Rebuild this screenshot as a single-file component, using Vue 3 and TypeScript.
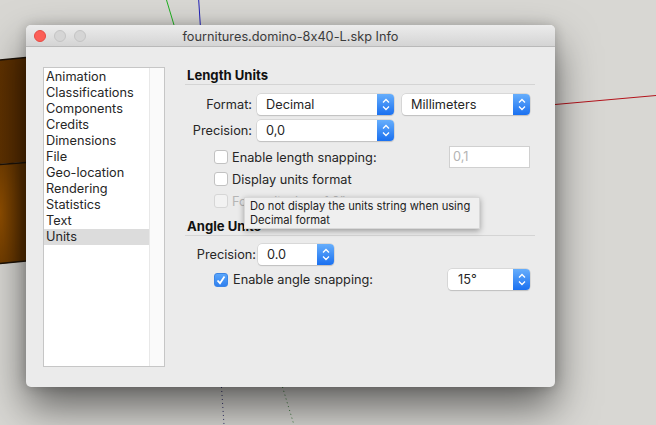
<script setup lang="ts">
const items: string[] = ['Animation','Classifications','Components','Credits','Dimensions','File','Geo-location','Rendering','Statistics','Text','Units']
</script>

<template>
  <div class="desktop">
    <svg class="scene" width="656" height="425" viewBox="0 0 656 425">
      <defs>
        <linearGradient id="b1" x1="0" y1="0" x2="1" y2="0"><stop offset="0" stop-color="#5e3100"/><stop offset="1" stop-color="#522a00"/></linearGradient>
        <radialGradient id="b2" cx="0" cy="0.5" r="0.9"><stop offset="0" stop-color="#8f4e00"/><stop offset="1" stop-color="#5a3000"/></radialGradient>
      </defs>
      <path d="M0 60 L26 57.500 V162 L0 164 Z" fill="url(#b1)"/>
      <path d="M0 164 L26 162 V261 L0 264 Z" fill="url(#b2)"/>
      <path d="M0 60 L26 57.500 M0 164.500 L26 162.500 M0 263.500 L26 261" stroke="#1c1208" stroke-width="1.500" fill="none"/>
      <path d="M166.500 0 L174 25" stroke="#1fb01f" fill="none"/>
      <path d="M198.700 0 L200.300 25" stroke="#2020b8" fill="none"/>
      <path d="M555 104.500 L656 95.500" stroke="#b4141c" fill="none"/>
      <path d="M221.500 387 L224 425" stroke="#30306a" stroke-dasharray="1 3" fill="none"/>
      <path d="M282.500 387 L294 425" stroke="#3c7a3c" stroke-dasharray="1 3" fill="none"/>
    </svg>

    <section class="window">
      <header class="titlebar">
        <div class="lights">
          <i class="light close"></i><i class="light"></i><i class="light"></i>
        </div>
        <span class="title">fournitures.domino-8x40-L.skp Info</span>
      </header>

      <div class="content">
        <div class="list">
          <ul class="rows">
            <li v-for="item in items" :key="item" :class="{ selected: item === 'Units' }">{{ item }}</li>
          </ul>
          <div class="track"></div>
        </div>

        <div class="panel">
          <h2 class="heading">Length Units</h2>

          <div class="row r-format">
            <label class="lab">Format:</label>
            <div class="select w137"><span>Decimal</span><b class="step"><svg width="10" height="15" viewBox="0 0 10 15"><path d="M2 5.500 L5 2.500 L8 5.500 M2 9.500 L5 12.500 L8 9.500" /></svg></b></div>
            <div class="select w128"><span>Millimeters</span><b class="step"><svg width="10" height="15" viewBox="0 0 10 15"><path d="M2 5.500 L5 2.500 L8 5.500 M2 9.500 L5 12.500 L8 9.500" /></svg></b></div>
          </div>

          <div class="row r-prec">
            <label class="lab">Precision:</label>
            <div class="select w137"><span>0,0</span><b class="step"><svg width="10" height="15" viewBox="0 0 10 15"><path d="M2 5.500 L5 2.500 L8 5.500 M2 9.500 L5 12.500 L8 9.500" /></svg></b></div>
          </div>

          <div class="check-row r-snap">
            <i class="box"></i><span>Enable length snapping:</span>
            <div class="field">0,1</div>
          </div>
          <div class="check-row r-disp">
            <i class="box"></i><span>Display units format</span>
          </div>
          <div class="check-row r-force dim">
            <i class="box"></i><span>Force display of 0"</span>
          </div>

          <h2 class="heading h-angle">Angle Units</h2>

          <div class="row r-angle">
            <label class="lab">Precision:</label>
            <div class="select w76"><span>0.0</span><b class="step"><svg width="10" height="15" viewBox="0 0 10 15"><path d="M2 5.500 L5 2.500 L8 5.500 M2 9.500 L5 12.500 L8 9.500" /></svg></b></div>
          </div>

          <div class="check-row r-asnap">
            <i class="box on"><svg width="14" height="14" viewBox="0 0 14 14"><path d="M3.500 7.500 L6 10.200 L10.500 3.500" /></svg></i>
            <span>Enable angle snapping:</span>
            <div class="select w82 push"><span>15°</span><b class="step"><svg width="10" height="15" viewBox="0 0 10 15"><path d="M2 5.500 L5 2.500 L8 5.500 M2 9.500 L5 12.500 L8 9.500" /></svg></b></div>
          </div>

          <div class="tooltip">Do not display the units string when using<br />Decimal format</div>
        </div>
      </div>
    </section>
  </div>
</template>

<style>
html, body { margin: 0; background: #d8d7d3; }
</style>

<style scoped>
.desktop { position: relative; width: 656px; height: 425px; overflow: hidden; background: #d8d7d3; font-family: Inter, Roboto, "Liberation Sans", sans-serif; font-feature-settings: "calt" 0; font-size: 12.750px; color: #262626; }
.scene { position: absolute; left: 0; top: 0; }
.window { position: absolute; left: 26px; top: 25px; width: 529px; height: 362px; background: #ebebeb; border-radius: 5px; box-shadow: 0 20px 42px rgba(0,0,0,.55), 0 0 12px rgba(0,0,0,.2); display: flex; flex-direction: column; overflow: visible; }
.titlebar { height: 21px; flex: none; position: relative; display: flex; align-items: center; justify-content: center; background: linear-gradient(#ececec, #d4d4d4); border-bottom: 1px solid #b9b9b9; border-radius: 5px 5px 0 0; }
.title { color: #3b3b3b; font-size: 12.750px; position: relative; top: 1px; }
.lights { position: absolute; left: 8px; top: 5px; display: flex; gap: 8px; }
.light { width: 12px; height: 12px; box-sizing: border-box; border-radius: 50%; background: #d5d5d5; border: 1px solid #c4c4c4; }
.light.close { background: #fc5f57; border-color: #e64a43; }
.content { flex: 1; display: flex; padding: 20px 20px 20px 17px; }
.list { width: 122px; height: 300px; box-sizing: border-box; flex: none; border: 1px solid #c6c6c6; background: #fff; display: flex; }
.rows { list-style: none; margin: 0; padding: 1px 0 0; width: 105px; height: 100%; box-sizing: border-box; }
.rows li { height: 16px; line-height: 16px; padding-left: 2px; }
.rows li.selected { background: #dcdcdc; }
.track { flex: 1; background: #fafafa; border-left: 1px solid #e8e8e8; }
.panel { position: relative; flex: 1; margin-left: 20px; width: 350px; }
.heading { margin: 0; padding: 0 0 1px 2px; height: 18px; box-sizing: border-box; line-height: 17px; font-size: 13.100px; font-weight: 700; color: #111; border-bottom: 1px solid #d4d4d4; }
.row { display: flex; align-items: center; }
.lab { text-align: right; }
.r-format { margin-top: 9px; }
.r-format .lab, .r-prec .lab { width: 67px; margin-right: 5px; }
.r-format .w128 { margin-left: 8px; }
.r-prec { margin-top: 5px; }
.select { height: 21px; box-sizing: border-box; background: #fff; border-radius: 4px; box-shadow: 0 0 0 .5px #c6c6c6, 0 1px 1px rgba(0,0,0,.2); display: flex; align-items: center; justify-content: space-between; padding-left: 9px; }
.w137 { width: 137px; }
.w128 { width: 128px; }
.w76 { width: 76px; }
.w82 { width: 82px; padding-left: 10px; }
.step { width: 17px; height: 21px; flex: none; border-radius: 0 4px 4px 0; background: linear-gradient(#66aefc, #1a70f0); display: flex; align-items: center; justify-content: center; }
.step svg path { fill: none; stroke: #fff; stroke-width: 1.300; }
.check-row { display: flex; align-items: center; margin-left: 29px; }
.box { width: 14px; height: 14px; flex: none; box-sizing: border-box; background: #fff; border: 1px solid #c2c2c2; border-radius: 3px; margin-right: 4px; display: block; }
.box svg { display: block; margin: -1px; }
.box svg path { fill: none; stroke: #fff; stroke-width: 1.800; }
.box.on { background: linear-gradient(#5aa6fb, #2f80ef); border-color: #3b85e6; margin-right: 5px; }
.r-snap { height: 22px; margin-top: 5px; }
.field { margin-left: auto; margin-right: 5px; width: 81px; height: 22px; box-sizing: border-box; background: #fff; border: 1px solid #d0d0d0; color: #b4b4b4; padding-left: 3px; line-height: 20px; }
.r-disp { margin-top: 1px; height: 20px; }
.r-force { margin-top: 2px; height: 20px; }
.dim { color: #b5b5b5; }
.dim .box { background: #f2f2f2; border-color: #d6d6d6; }
.h-angle { margin-top: 7px; }
.r-angle { margin-top: 8px; margin-left: 1px; }
.r-angle .lab { width: 70px; margin-right: 2px; }
.r-asnap { margin-top: 4px; height: 21px; }
.push { margin-left: auto; margin-right: 5px; }
.tooltip { position: absolute; left: 59px; top: 130px; width: 236px; height: 32px; box-sizing: border-box; padding: 1px 5px; background: #efefef; border: 1px solid #d8d8d8; box-shadow: 0 2px 6px rgba(0,0,0,.35); font-size: 11.150px; line-height: 14px; color: #222; white-space: nowrap; }
</style>
